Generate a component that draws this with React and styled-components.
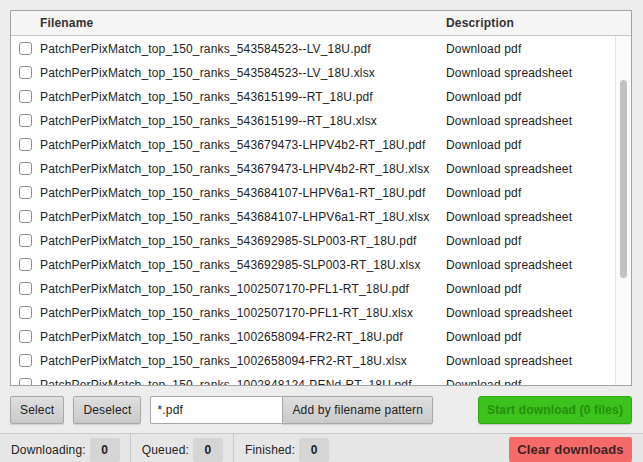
import React from 'react'
import styled, { createGlobalStyle } from 'styled-components'

const GlobalStyle = createGlobalStyle`
  html, body {
    margin: 0;
    padding: 0;
    background: #ececec;
    font-family: 'Liberation Sans', Arial, Helvetica, sans-serif;
    font-size: 12px;
    letter-spacing: 0.17px;
    color: #222;
  }
  button, input {
    letter-spacing: inherit;
    font-family: inherit;
  }
`

const Page = styled.div`
  width: 643px;
  height: 462px;
  display: flex;
  flex-direction: column;
  overflow: hidden;
`

const Main = styled.div`
  flex: 1;
  padding: 10px 11px 0 10px;
  display: flex;
  flex-direction: column;
`

const Table = styled.div`
  height: 376px;
  box-sizing: border-box;
  border: 1px solid #a3a3a3;
  background: #fff;
  display: flex;
  flex-direction: column;
  overflow: hidden;
`

const Columns = styled.div`
  display: grid;
  grid-template-columns: 29px 406px 1fr;
  align-items: center;
  box-sizing: border-box;
`

const Header = styled(Columns)`
  height: 25px;
  flex-shrink: 0;
  background: #f5f5f5;
  border-bottom: 1px solid #c6c6c6;
  font-weight: bold;
  color: #333;
`

const Body = styled.div`
  flex: 1;
  display: flex;
  min-height: 0;
`

const List = styled.div`
  flex: 1;
  overflow: hidden;
`

const Row = styled(Columns)`
  height: 24px;
  padding-top: 1px;
`

const Check = styled.span`
  width: 11px;
  height: 11px;
  margin-left: 8px;
  border: 1px solid #8c8c8c;
  border-radius: 3px;
  background: #fff;
`

const Track = styled.div`
  width: 15px;
  background: #fafafa;
  border-left: 1px solid #e6e6e6;
  padding-top: 44px;
  display: flex;
  justify-content: center;
`

const Thumb = styled.div`
  width: 7px;
  height: 198px;
  border-radius: 4px;
  background: #c1c1c1;
`

const Toolbar = styled.div`
  display: flex;
  align-items: center;
  margin-top: 10px;
  height: 28px;
`

const Button = styled.button`
  height: 28px;
  box-sizing: border-box;
  padding: 0 9px;
  margin-right: ${p => p.$gap || 0}px;
  border: 1px solid #a8a8a8;
  border-radius: ${p => (p.$joined ? '0 2px 2px 0' : '2px')};
  background: linear-gradient(#dedede, #c9c9c9);
  box-shadow: 0 1px 1px rgba(0, 0, 0, 0.12);
  font-size: 12px;
  line-height: 14px;
  color: #222;
`

const Pattern = styled.input`
  width: 132px;
  height: 28px;
  box-sizing: border-box;
  border: 1px solid #a8a8a8;
  border-right: none;
  border-radius: 2px 0 0 2px;
  padding: 0 6px;
  font-size: 12px;
  color: #222;
  outline: none;
`

const StartButton = styled.button`
  margin-left: auto;
  width: 154px;
  height: 28px;
  box-sizing: border-box;
  border: 1px solid #32a814;
  border-radius: 3px;
  background: #3dc11c;
  box-shadow: 0 1px 1px rgba(0, 0, 0, 0.15);
  font-size: 12px;
  line-height: 14px;
  font-weight: bold;
  color: #24900d;
`

const StatusBar = styled.div`
  height: 28px;
  border-top: 1px solid #cacaca;
  background: #e6e6e6;
  display: flex;
  align-items: stretch;
  padding-right: 11px;
`

const Stat = styled.div`
  display: flex;
  align-items: center;
  gap: 4px;
  padding: 3px 10px 0 11px;
  border-right: ${p => (p.$last ? 'none' : '1px solid #c8c8c8')};
`

const Label = styled.span`
  color: #222;
`

const Count = styled.span`
  width: 30px;
  height: 24px;
  display: flex;
  align-items: center;
  justify-content: center;
  background: #d5d5d5;
  border-radius: 2px;
  font-weight: bold;
`

const ClearButton = styled.button`
  margin: 3px 0 0 auto;
  width: 123px;
  height: 25px;
  border: none;
  border-radius: 2px;
  background: #f76a6a;
  font-size: 13px;
  line-height: 15px;
  font-weight: bold;
  color: #3b2424;
`

const files = [
  '543584523--LV_18U',
  '543615199--RT_18U',
  '543679473-LHPV4b2-RT_18U',
  '543684107-LHPV6a1-RT_18U',
  '543692985-SLP003-RT_18U',
  '1002507170-PFL1-RT_18U',
  '1002658094-FR2-RT_18U',
  '1002848124-PENd-RT_18U',
]

// only the rows that fit in the visible part of the list
const rows = files
  .flatMap(f => [
    { name: `PatchPerPixMatch_top_150_ranks_${f}.pdf`, desc: 'Download pdf' },
    { name: `PatchPerPixMatch_top_150_ranks_${f}.xlsx`, desc: 'Download spreadsheet' },
  ])
  .slice(0, 15)

const stats = [
  { label: 'Downloading:', value: 0 },
  { label: 'Queued:', value: 0 },
  { label: 'Finished:', value: 0 },
]

const App = () => {
  return (
    <Page>
      <GlobalStyle />
      <Main>
        <Table>
          <Header>
            <span />
            <span>Filename</span>
            <span>Description</span>
          </Header>
          <Body>
            <List>
              {rows.map(r => (
                <Row key={r.name}>
                  <Check />
                  <span>{r.name}</span>
                  <span>{r.desc}</span>
                </Row>
              ))}
            </List>
            <Track>
              <Thumb />
            </Track>
          </Body>
        </Table>
        <Toolbar>
          <Button $gap={9}>Select</Button>
          <Button $gap={9}>Deselect</Button>
          <Pattern defaultValue='*.pdf' />
          <Button $joined>Add by filename pattern</Button>
          <StartButton>Start download (0 files)</StartButton>
        </Toolbar>
      </Main>
      <StatusBar>
        {stats.map((s, i) => (
          <Stat key={s.label} $last={i === stats.length - 1}>
            <Label>{s.label}</Label>
            <Count>{s.value}</Count>
          </Stat>
        ))}
        <ClearButton>Clear downloads</ClearButton>
      </StatusBar>
    </Page>
  )
}

export default App
